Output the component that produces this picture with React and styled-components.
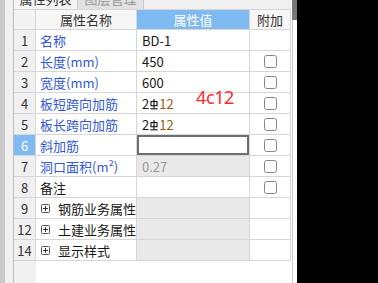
import React from 'react';
import styled, { createGlobalStyle } from 'styled-components';

const Global = createGlobalStyle`
  html, body { margin: 0; padding: 0; background: #000; }
  body {
    font-family: "Noto Sans CJK SC", "Noto Sans", sans-serif;
    font-size: 13px;
    color: #1a1a1a;
  }
  * { box-sizing: border-box; }
`;

const Page = styled.div`
  display: flex;
  width: 378px;
  height: 283px;
  background: #000;
  overflow: hidden;
`;

const Panel = styled.div`
  display: flex;
  width: 297px;
  height: 100%;
  background: #fff;
  flex-shrink: 0;
`;

const GutterDark = styled.div`
  width: 5px;
  background: #c9c9c9;
  flex-shrink: 0;
`;

const GutterLight = styled.div`
  width: 9px;
  background: #f0f0f0;
  border-right: 1px solid #bdbdbd;
  flex-shrink: 0;
`;

const Main = styled.div`
  position: relative;
  display: flex;
  flex-direction: column;
  width: 277px;
  flex-shrink: 0;
`;

const TabBar = styled.div`
  height: 9px;
  overflow: hidden;
  display: flex;
  align-items: flex-end;
  background: #f0f0f0;
`;

const Tab = styled.div`
  flex-shrink: 0;
  height: 24px;
  width: ${p => p.$w}px;
  padding-top: 4px;
  line-height: 20px;
  text-align: center;
  background: ${p => (p.$active ? '#f4f4f4' : '#e2e2e2')};
  color: ${p => (p.$active ? '#333' : '#9a9a9a')};
  border-right: 1px solid #c8c8c8;
`;

const Row = styled.div`
  display: grid;
  grid-template-columns: 22px 101px 113px 41px;
  height: 21px;
  ${p => p.$header && 'border-top: 1px solid #d6d6d6;'}
`;

const Cell = styled.div`
  display: flex;
  align-items: center;
  justify-content: ${p => (p.$center ? 'center' : 'flex-start')};
  padding: ${p => (p.$center ? '0' : '0 4px')};
  border-right: 1px solid #d6d6d6;
  border-bottom: 1px solid #d6d6d6;
  background: ${p => p.$bg || '#fff'};
  color: ${p => p.$color || '#1a1a1a'};
  white-space: nowrap;
  overflow: hidden;
  ${p => p.$editing && 'box-shadow: inset 0 0 0 2px #6f6f6f;'}
`;

const ValueCell = styled(Cell)`
  padding-left: 5px;
`;

const Filler = styled.div`
  flex: 1;
  display: grid;
  grid-template-columns: 22px 255px;
`;

const FillerNum = styled.div`
  background: #f0f0f0;
`;

const Spacer = styled.div`
  width: 1px;
  flex-shrink: 0;
  background: #fff;
`;

const ScrollTrack = styled.div`
  width: 5px;
  flex-shrink: 0;
  border-left: 1px solid #c8c8c8;
  background: #fff;
  position: relative;
`;

const ScrollThumb = styled.div`
  position: absolute;
  left: -1px;
  top: 0;
  width: 5px;
  height: 20px;
  background: #777;
`;

const Check = styled.span`
  display: inline-block;
  width: 13px;
  height: 13px;
  border: 1px solid #868686;
  border-radius: 2.5px;
  background: #fff;
`;

const Expand = styled.span`
  display: inline-flex;
  align-items: center;
  justify-content: center;
  width: 9px;
  height: 9px;
  border: 1px solid #555;
  border-radius: 1.5px;
  margin-right: 8px;
  margin-left: 1px;
  flex-shrink: 0;
`;

const Twelve = styled.span`
  color: #9a5a0c;
`;

const Note = styled.div`
  position: absolute;
  left: 182px;
  top: 86px;
  font-family: "Noto Sans", sans-serif;
  font-size: 18px;
  line-height: 22px;
  color: #ff2a2a;
  letter-spacing: -0.4px;
`;

const Rebar = () => (
  <svg width="8" height="11" viewBox="0 0 8 11" style={{ verticalAlign: '-1px', margin: '0 1px' }}>
    <rect x="1" y="2.5" width="6" height="4.2" fill="none" stroke="#111" strokeWidth="1.1" />
    <line x1="4" y1="0" x2="4" y2="9.5" stroke="#111" strokeWidth="1.1" />
    <line x1="0.3" y1="9.8" x2="7.7" y2="9.8" stroke="#111" strokeWidth="1.1" />
  </svg>
);

const PlusIcon = () => (
  <svg width="7" height="7" viewBox="0 0 7 7">
    <line x1="3.5" y1="1" x2="3.5" y2="6" stroke="#333" strokeWidth="1" />
    <line x1="1" y1="3.5" x2="6" y2="3.5" stroke="#333" strokeWidth="1" />
  </svg>
);

const BLUE = '#3157d6';

const rows = [
  { n: '1', name: '名称', value: 'BD-1', blue: true, check: false },
  { n: '2', name: '长度(mm)', value: '450', blue: true, check: true },
  { n: '3', name: '宽度(mm)', value: '600', blue: true, check: true },
  { n: '4', name: '板短跨向加筋', rebar: true, blue: true, check: true },
  { n: '5', name: '板长跨向加筋', rebar: true, blue: true, check: true },
  { n: '6', name: '斜加筋', value: '', blue: true, check: true, selected: true },
  { n: '7', name: '洞口面积(m²)', value: '0.27', blue: true, check: true, readonly: true },
  { n: '8', name: '备注', value: '', check: true },
  { n: '9', name: '钢筋业务属性', group: true },
  { n: '12', name: '土建业务属性', group: true },
  { n: '14', name: '显示样式', group: true },
];

export default function App() {
  return (
    <Page>
      <Global />
      <Panel>
        <GutterDark />
        <GutterLight />
        <Main>
          <TabBar>
            <Tab $active $w={64}>属性列表</Tab>
            <Tab $w={66}>图层管理</Tab>
          </TabBar>
          <Row $header>
            <Cell $center $bg="#f3f3f3" />
            <Cell $center $bg="#f6f6f6" $color="#333">属性名称</Cell>
            <Cell $center $bg="#80baf2" $color="#fff">属性值</Cell>
            <Cell $center $bg="#f6f6f6" $color="#333">附加</Cell>
          </Row>
          {rows.map(r => (
            <Row key={r.n}>
              <Cell
                $center
                $bg={r.selected ? '#80baf2' : '#f0f0f0'}
                $color={r.selected ? '#fff' : '#333'}
              >
                {r.n}
              </Cell>
              <Cell $color={r.blue ? BLUE : '#1a1a1a'}>
                {r.group && (
                  <Expand>
                    <PlusIcon />
                  </Expand>
                )}
                {r.name}
              </Cell>
              <ValueCell
                $bg={r.group || r.readonly ? '#e9e9e9' : '#fff'}
                $color={r.readonly ? '#9a9a9a' : '#1a1a1a'}
                $editing={r.selected}
              >
                {r.rebar ? (
                  <span>
                    2<Rebar />
                    <Twelve>12</Twelve>
                  </span>
                ) : (
                  r.value
                )}
              </ValueCell>
              <Cell $center>{r.check && <Check />}</Cell>
            </Row>
          ))}
          <Filler>
            <FillerNum />
            <div />
          </Filler>
          <Note>4c12</Note>
        </Main>
        <Spacer />
        <ScrollTrack>
          <ScrollThumb />
        </ScrollTrack>
      </Panel>
    </Page>
  );
}
